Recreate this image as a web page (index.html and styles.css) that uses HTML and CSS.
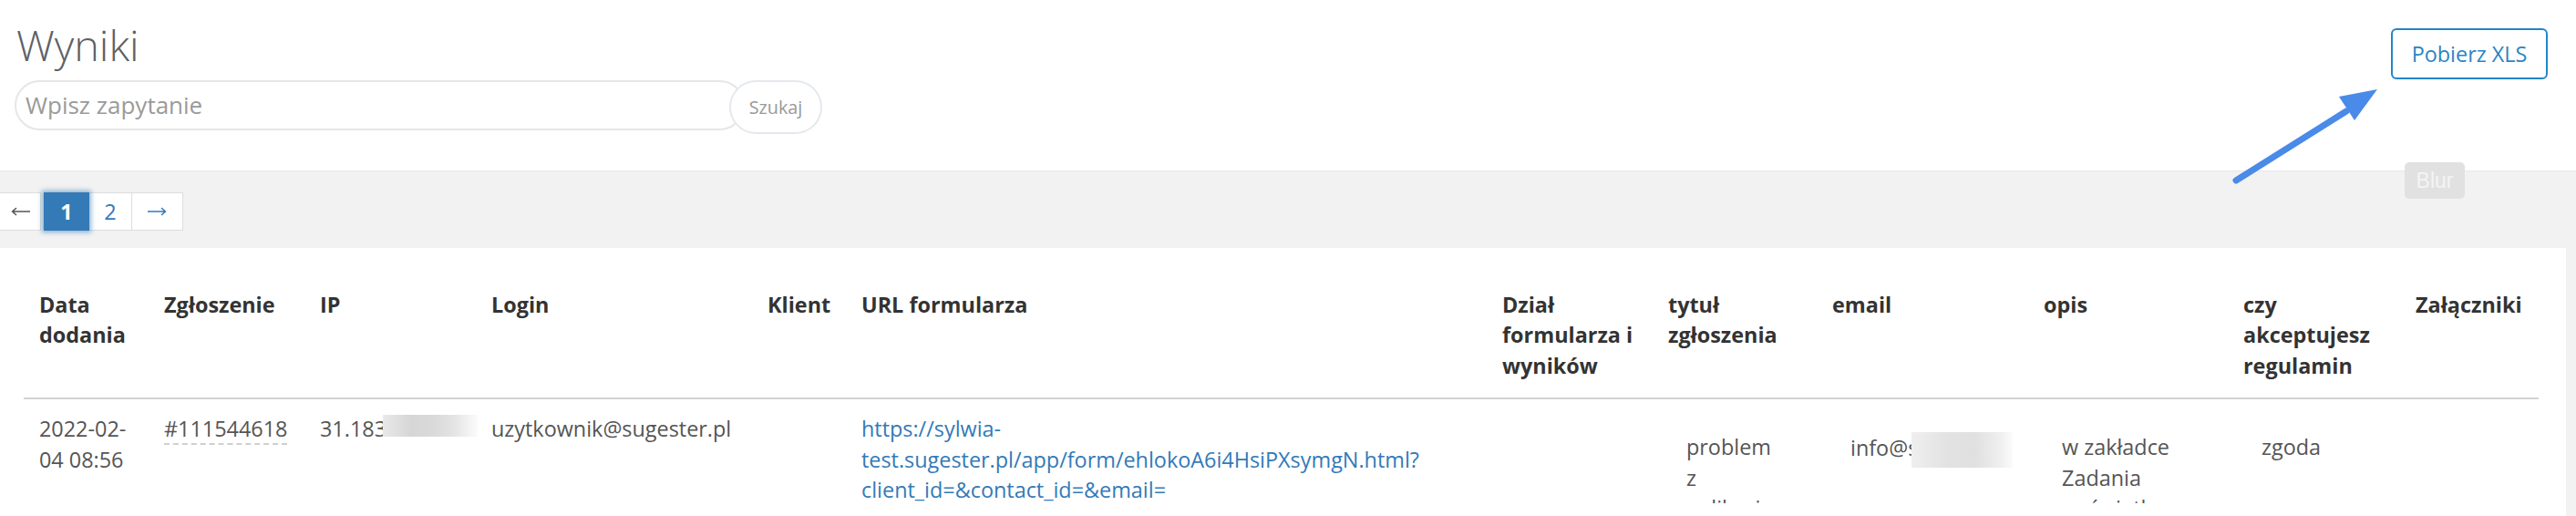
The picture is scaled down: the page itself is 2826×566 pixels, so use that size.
FILE: index.html
```html
<!DOCTYPE html>
<html lang="pl">
<head>
<meta charset="utf-8">
<title>Wyniki</title>
<link rel="stylesheet" href="styles.css">
</head>
<body>
<div class="page">
  <header class="topbar">
    <div class="topbar-left">
      <h1 class="title">Wyniki</h1>
      <form class="search">
        <input class="search-input" type="text" placeholder="Wpisz zapytanie">
        <button class="search-btn" type="button">Szukaj</button>
      </form>
    </div>
    <button class="xls-btn" type="button">Pobierz XLS</button>
  </header>

  <nav class="pager">
    <span class="pg pg-prev" aria-label="poprzednia"><svg class="pg-arrow" width="21" height="10" viewBox="0 0 21 10"><path d="M20.5 5H1.5M1.5 5L5.5 1.5M1.5 5L5.5 8.5" fill="none" stroke="currentColor" stroke-width="1.6" stroke-linecap="round" stroke-linejoin="round"/></svg></span><span class="pg pg-active">1</span><span class="pg pg-num">2</span><span class="pg pg-next" aria-label="następna"><svg class="pg-arrow" width="21" height="10" viewBox="0 0 21 10"><path d="M0.5 5H19.5M19.5 5L15.5 1.5M19.5 5L15.5 8.5" fill="none" stroke="currentColor" stroke-width="1.6" stroke-linecap="round" stroke-linejoin="round"/></svg></span>
  </nav>

  <section class="panel">
    <table class="results">
      <colgroup>
        <col class="w-date"><col class="w-ticket"><col class="w-ip"><col class="w-login"><col class="w-client"><col class="w-url"><col class="w-dept"><col class="w-topic"><col class="w-email"><col class="w-desc"><col class="w-terms"><col class="w-att">
      </colgroup>
      <thead>
        <tr>
          <th>Data dodania</th>
          <th>Zgłoszenie</th>
          <th>IP</th>
          <th>Login</th>
          <th>Klient</th>
          <th>URL formularza</th>
          <th>Dział formularza i wyników</th>
          <th>tytuł zgłoszenia</th>
          <th>email</th>
          <th>opis</th>
          <th>czy akceptujesz regulamin</th>
          <th>Załączniki</th>
        </tr>
      </thead>
      <tbody>
        <tr>
          <td>2022-02-04 08:56</td>
          <td><span class="ticket">#111544618</span></td>
          <td class="nowrap">31.183<span class="blur blur-ip"></span></td>
          <td>uzytkownik@sugester.pl</td>
          <td></td>
          <td><a class="link" href="#">https://sylwia-test.sugester.pl/app/form/ehlokoA6i4HsiPXsymgN.html?<wbr>client_id=&amp;contact_id=&amp;email=</a></td>
          <td><div class="cf"></div></td>
          <td><div class="cf">problem z aplikacją</div></td>
          <td><div class="cf nowrap">info@s<span class="blur blur-email"></span></div></td>
          <td><div class="cf">w zakładce Zadania wyświetlane są błędy</div></td>
          <td><div class="cf">zgoda</div></td>
          <td></td>
        </tr>
      </tbody>
    </table>
  </section>

  <svg class="arrow" width="180" height="120" viewBox="0 0 180 120" aria-hidden="true">
    <line x1="13" y1="108" x2="134" y2="32" stroke="#4a8ae8" stroke-width="7" stroke-linecap="round"/>
    <polygon points="126,16 168,8 143,42" fill="#4a8ae8"/>
  </svg>
  <div class="blur-label">Blur</div>
</div>
</body>
</html>
```

FILE: styles.css
```css
html, body {
  margin: 0;
  padding: 0;
  height: 566px;
  overflow: hidden;
  background: #f2f2f2;
}

body {
  font-family: "Open Sans", "Noto Sans", sans-serif;
  font-size: 23.4px;
  line-height: 1.42857;
  color: #555;
}

.page {
  position: relative;
  min-height: 566px;
}

/* ---------- top bar ---------- */
.topbar {
  display: flex;
  justify-content: space-between;
  align-items: flex-start;
  height: 187px;
  background: #fff;
  border-bottom: 1px solid #e4e8ec;
}

.topbar-left {
  display: flex;
  flex-direction: column;
  padding-left: 16px;
}

.title {
  margin: 24px 0 0 2px;
  font-size: 46.8px;
  line-height: 51.5px;
  font-weight: 300;
  color: #5d6166;
}

.search {
  display: flex;
  align-items: flex-start;
  margin: 12px 0 0 0;
}

.search-input {
  box-sizing: border-box;
  width: 801px;
  height: 55px;
  padding: 0 12px 0 10px;
  border: 2px solid #e6e6e6;
  border-radius: 28px;
  font-family: "Open Sans", sans-serif;
  font-size: 26px;
  color: #555;
  background: #fff;
  outline: none;
}

.search-input::placeholder {
  color: #9a9a9a;
}

.search-btn {
  box-sizing: border-box;
  width: 102px;
  height: 59px;
  margin-left: -17px;
  border: 2px solid #e4e9ee;
  border-radius: 30px;
  background: #fff;
  font-family: "Open Sans", sans-serif;
  font-size: 19.8px;
  color: #999;
  padding: 0;
}

.xls-btn {
  box-sizing: border-box;
  width: 172px;
  height: 56px;
  margin: 31px 31px 0 0;
  border: 2px solid #2186c9;
  border-radius: 6px;
  background: #fff;
  font-family: "Open Sans", sans-serif;
  font-size: 23.4px;
  color: #2a85c5;
  padding: 0;
}

/* ---------- pager ---------- */
.pager {
  display: flex;
  margin: 23px 0 0 -6px;
  height: 42px;
}

.pg {
  box-sizing: border-box;
  display: flex;
  align-items: center;
  justify-content: center;
  height: 42px;
  line-height: 40px;
  background: #fff;
  border: 1px solid #dddddd;
  color: #337ab7;
  font-size: 23.4px;
}

.pg-arrow {
  display: block;
}

.pg-prev {
  width: 51px;
  color: #555;
  padding-left: 6px;
}

.pg-active {
  width: 50px;
  margin-left: 3px;
  background: #337ab7;
  border-color: #337ab7;
  color: #fff;
  font-weight: 700;
  box-shadow: 0 0 5px 2px rgba(51, 122, 183, 0.55);
  position: relative;
}

.pg-num {
  width: 47px;
  border-left: none;
}

.pg-next {
  width: 57px;
  margin-left: -1px;
}

/* ---------- panel / table ---------- */
.panel {
  margin: 19px 11px 0 0;
  padding: 32px 0 0 26px;
  background: #fff;
  height: 300px;
}

.results {
  table-layout: fixed;
  width: 2759px;
  border-collapse: separate;
  border-spacing: 0;
}

.w-date { width: 137px; }
.w-ticket { width: 171px; }
.w-ip { width: 188px; }
.w-login { width: 303px; }
.w-client { width: 103px; }
.w-url { width: 703px; }
.w-dept { width: 182px; }
.w-topic { width: 180px; }
.w-email { width: 232px; }
.w-desc { width: 219px; }
.w-terms { width: 189px; }
.w-att { width: 152px; }

.results th {
  text-align: left;
  vertical-align: top;
  padding: 14px 8px 18px 17px;
  font-weight: 700;
  color: #333;
  border-bottom: 2px solid #d2d2d2;
}

.results td {
  vertical-align: top;
  padding: 16px 17px 8px 17px;
  color: #555;
}

.nowrap {
  white-space: nowrap;
}

.ticket {
  border-bottom: 2px dashed #d0d0d0;
}

.link {
  color: #337ab7;
  text-decoration: none;
}

.cf {
  box-sizing: border-box;
  max-height: 98px;
  overflow: hidden;
  padding: 20px;
}

.blur {
  display: inline-block;
  vertical-align: baseline;
  background: linear-gradient(90deg, #e9e9e9 0%, #d6d6d6 30%, #dadada 55%, #e4e4e4 75%, #fbfbfb 100%);
}

.blur-ip {
  width: 104px;
  height: 24px;
  margin-left: -4px;
}

.blur-email {
  width: 115px;
  height: 39px;
  margin-left: -7px;
  vertical-align: -13px;
  background: linear-gradient(90deg, #efefef 0%, #e2e2e2 35%, #e0e0e0 60%, #efefef 85%, #ffffff 100%);
}

/* ---------- overlays ---------- */
.arrow {
  position: absolute;
  left: 2440px;
  top: 90px;
}

.blur-label {
  position: absolute;
  left: 2638px;
  top: 178px;
  width: 66px;
  height: 40px;
  line-height: 40px;
  border-radius: 5px;
  background: #e1e1e1;
  color: #f4f4f4;
  text-align: center;
  font-family: "Liberation Sans", Arial, sans-serif;
  font-size: 23px;
}
```
